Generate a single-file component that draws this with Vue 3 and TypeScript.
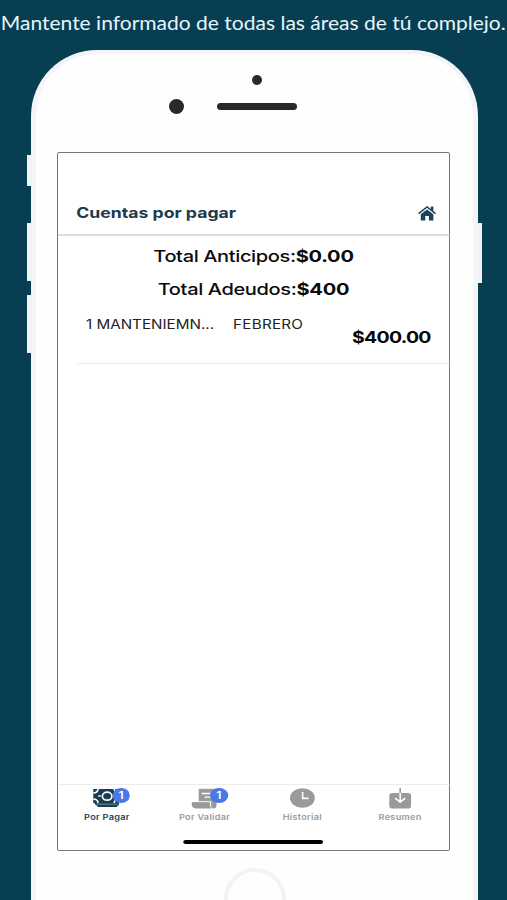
<script setup lang="ts">
interface Charge {
  concept: string
  month: string
  amount: string
}

interface Tab {
  id: string
  label: string
  badge?: number
}

const totals = [
  { id: 'anticipos', label: 'Total Anticipos:', value: '$0.00' },
  { id: 'adeudos', label: 'Total Adeudos:', value: '$400' },
]

const charges: Charge[] = [
  { concept: '1 MANTENIEMN...', month: 'FEBRERO', amount: '$400.00' },
]

const tabs: Tab[] = [
  { id: 'pagar', label: 'Por Pagar', badge: 1 },
  { id: 'validar', label: 'Por Validar', badge: 1 },
  { id: 'historial', label: 'Historial' },
  { id: 'resumen', label: 'Resumen' },
]
const active = 'pagar'
</script>

<template>
  <main class="page">
    <h1 class="headline"><span class="headline-text">Mantente informado de todas las áreas de tú complejo.</span></h1>
    <div class="phone">
      <i class="key mute"></i>
      <i class="key up"></i>
      <i class="key down"></i>
      <i class="key power"></i>
      <i class="sensor"></i>
      <i class="camera"></i>
      <i class="speaker"></i>
      <div class="screen">
        <div class="app">
          <header class="bar">
            <h2 class="title">Cuentas por pagar</h2>
            <svg class="home" viewBox="0 0 18 15" preserveAspectRatio="none">
              <path d="M2.800 8.300 9 3.400l6.200 4.900v6.200h-4.400V10H7.200v4.500H2.800z" fill="#1d4358" />
              <path d="M.6 7.600 9 1l8.400 6.600" fill="none" stroke="#1d4358" stroke-width="1.500" />
              <path d="M12.700.6h2.500v5l-2.500-2z" fill="#1d4358" />
            </svg>
          </header>
          <section class="totals">
            <p v-for="t in totals" :key="t.id" class="total" :class="t.id">{{ t.label }}<b>{{ t.value }}</b></p>
          </section>
          <ul class="list">
            <li v-for="c in charges" :key="c.concept" class="item">
              <span class="concept">{{ c.concept }}</span>
              <span class="month">{{ c.month }}</span>
              <strong class="amount">{{ c.amount }}</strong>
            </li>
          </ul>
          <nav class="tabs">
            <div v-for="t in tabs" :key="t.id" class="tab" :class="{ on: t.id === active }">
              <div class="icon">
                <svg v-if="t.id === 'pagar'" viewBox="0 0 27 20" preserveAspectRatio="none">
                  <path d="M0 1h26v14H0z" fill="currentColor" />
                  <path d="M1.500 15h24.500v1.500L23.500 19H5L1.500 16z" fill="currentColor" />
                  <path d="M3 16.200h22" stroke="#9fb2bd" stroke-width=".7" />
                  <ellipse cx="14" cy="8.200" rx="4.800" ry="4" fill="none" stroke="#fff" stroke-width="1.700" />
                  <path d="M0 5c3 0 4.500-1.200 5-4M0 11c3 0 4.500 1.200 5 4M26 5c-3 0-4.500-1.200-5-4M26 11c-3 0-4.500 1.200-5 4M5 8h2.500" fill="none" stroke="#fff" stroke-width="1.600" />
                </svg>
                <svg v-else-if="t.id === 'validar'" viewBox="0 0 27 20" preserveAspectRatio="none">
                  <path d="M7 .5l1.500.8L10 .5l1.500.8L13 .5l1.500.8 1.500-.8 1.500.8 1.500-.8 1.500.8 1.500-.8 1.500.8 1.500-.8V17q0 3.500-3 3.500-2.500 0-2.500-3v-4H7z" fill="currentColor" />
                  <path d="M0 14h18.500v3q0 2 1.500 3.500H5Q0 20.500 0 16z" fill="currentColor" />
                  <path d="M10 5.500h11M13 9.200h8" stroke="#fff" stroke-width="1.300" />
                  <path d="M0 13.700h18.700v4" fill="none" stroke="#fff" stroke-width=".7" />
                </svg>
                <svg v-else-if="t.id === 'historial'" viewBox="0 0 27 20" preserveAspectRatio="none">
                  <ellipse cx="13.500" cy="10" rx="12.500" ry="9.800" fill="currentColor" />
                  <path d="M13.700 4v6.400h6" fill="none" stroke="#fff" stroke-width="1.600" />
                </svg>
                <svg v-else viewBox="0 0 27 20" preserveAspectRatio="none">
                  <rect x="3" y="5" width="22" height="15.500" rx="2.500" fill="currentColor" />
                  <path d="M14 5v9M9 10.200l5 4 5-4" fill="none" stroke="#fff" stroke-width="1.600" />
                  <path d="M14 0v5" stroke="currentColor" stroke-width="1.600" />
                </svg>
                <span v-if="t.badge" class="badge">{{ t.badge }}</span>
              </div>
              <span class="label">{{ t.label }}</span>
            </div>
          </nav>
          <div class="indicator"></div>
        </div>
      </div>
      <div class="home-button"></div>
    </div>
  </main>
</template>

<style>
body {
  background: #073e51;
  overflow: hidden;
}
</style>

<style scoped>
.page {
  box-sizing: border-box;
  width: 507px;
  height: 900px;
  overflow: hidden;
  background: #073e51;
  font-family: Inter, "Liberation Sans", sans-serif;
}
.headline {
  height: 50px;
  margin: 0;
  display: flex;
  justify-content: center;
  color: #e6f5fb;
  font: 400 19.500px/45px Lato, sans-serif;
  white-space: nowrap;
}
.headline-text {
  transform: scaleX(1.078);
}
.phone {
  position: relative;
  box-sizing: border-box;
  width: 447px;
  height: 960px;
  margin-left: 31px;
  padding: 97px 22px 0;
  border: 4px solid #f3f5f7;
  border-left-width: 5px;
  border-right-width: 5px;
  border-top-color: #f1f5f7;
  border-radius: 66px;
  background: #fefefe;
}
.phone {
  padding-top: 98px;
}
.key {
  position: absolute;
  left: -9.500px;
  width: 5px;
  background: #f1f3f5;
}
.mute { top: 101px; height: 31px; }
.up { top: 169px; height: 58px; }
.down { top: 241px; height: 58px; }
.power { left: auto; right: -9px; top: 169px; height: 60px; }
.sensor,
.camera,
.speaker {
  position: absolute;
  background: #292929;
  border-radius: 50%;
}
.sensor { left: 215.800px; top: 21px; width: 10px; height: 10px; }
.camera { left: 133px; top: 44.500px; width: 15px; height: 15px; }
.speaker { left: 180.500px; top: 49px; width: 80px; height: 7px; border-radius: 4px; }
.screen {
  box-sizing: border-box;
  width: 393px;
  height: 699px;
  margin-left: -1px;
  border: 1.500px solid #777;
  border-radius: 2px;
  background: #fff;
}
/* The app is laid out at its own width and stretched to the frame. */
.app {
  display: flex;
  flex-direction: column;
  width: 321.500px;
  height: 697px;
  transform: scaleX(1.216);
  transform-origin: 0 0;
}
.bar {
  box-sizing: border-box;
  height: 83px;
  padding: 39px 11px 0 15px;
  border-bottom: 2px solid #dcdcdc;
  display: flex;
  align-items: center;
  justify-content: space-between;
}
.title {
  margin: 0;
  color: #20394b;
  font-size: 14.500px;
  font-weight: 700;
  line-height: 20px;
}
.home {
  width: 15px;
  height: 15px;
}
.totals {
  padding-top: 4px;
  text-align: center;
}
.total {
  margin: 0;
  color: #0b0b0b;
  font-size: 16.500px;
  font-weight: 500;
  letter-spacing: -0.320px;
  line-height: 33px;
}
.total b {
  font-weight: 700;
  letter-spacing: -0.200px;
}
.list {
  list-style: none;
  margin: 0 0 0 16px;
  padding: 0;
  flex: 1;
}
.item {
  box-sizing: border-box;
  height: 58px;
  padding: 9px 15px 0 7px;
  display: grid;
  grid-template-columns: 121px 80px 1fr;
  border-bottom: 1.500px solid #e6e6e6;
  color: #222;
  font-size: 12.500px;
  line-height: 20px;
  white-space: nowrap;
}
.month {
  letter-spacing: 0.200px;
}
.amount {
  justify-self: end;
  padding-top: 12px;
  color: #080808;
  font-size: 16px;
  font-weight: 700;
  letter-spacing: -0.600px;
}
.tabs {
  display: grid;
  grid-template-columns: repeat(4, 1fr);
  height: 55px;
  border-top: 1px solid #ececec;
}
.tab {
  display: flex;
  flex-direction: column;
  align-items: center;
  padding-top: 3px;
  color: #9a9a9a;
}
.tab.on {
  color: #173d52;
}
.icon {
  position: relative;
  width: 22px;
  height: 20px;
}
.icon svg {
  display: block;
  width: 22px;
  height: 20px;
  overflow: visible;
}
.badge {
  position: absolute;
  left: 15.500px;
  top: 0;
  width: 14.500px;
  height: 15px;
  border-radius: 50%;
  background: #4779e8;
  color: #fff;
  font-size: 10px;
  font-weight: 600;
  line-height: 15px;
  text-align: center;
}
.label {
  margin-top: 5px;
  font-size: 7.500px;
  font-weight: 600;
  letter-spacing: 0.250px;
  line-height: 10px;
}
.indicator {
  width: 115px;
  height: 4px;
  margin: 0 auto 6px;
  border-radius: 3px;
  background: #000;
}
.home-button {
  box-sizing: border-box;
  width: 62px;
  height: 62px;
  margin: 17px auto 0;
  border: 4px solid #f3f3f3;
  border-radius: 50%;
}
</style>
